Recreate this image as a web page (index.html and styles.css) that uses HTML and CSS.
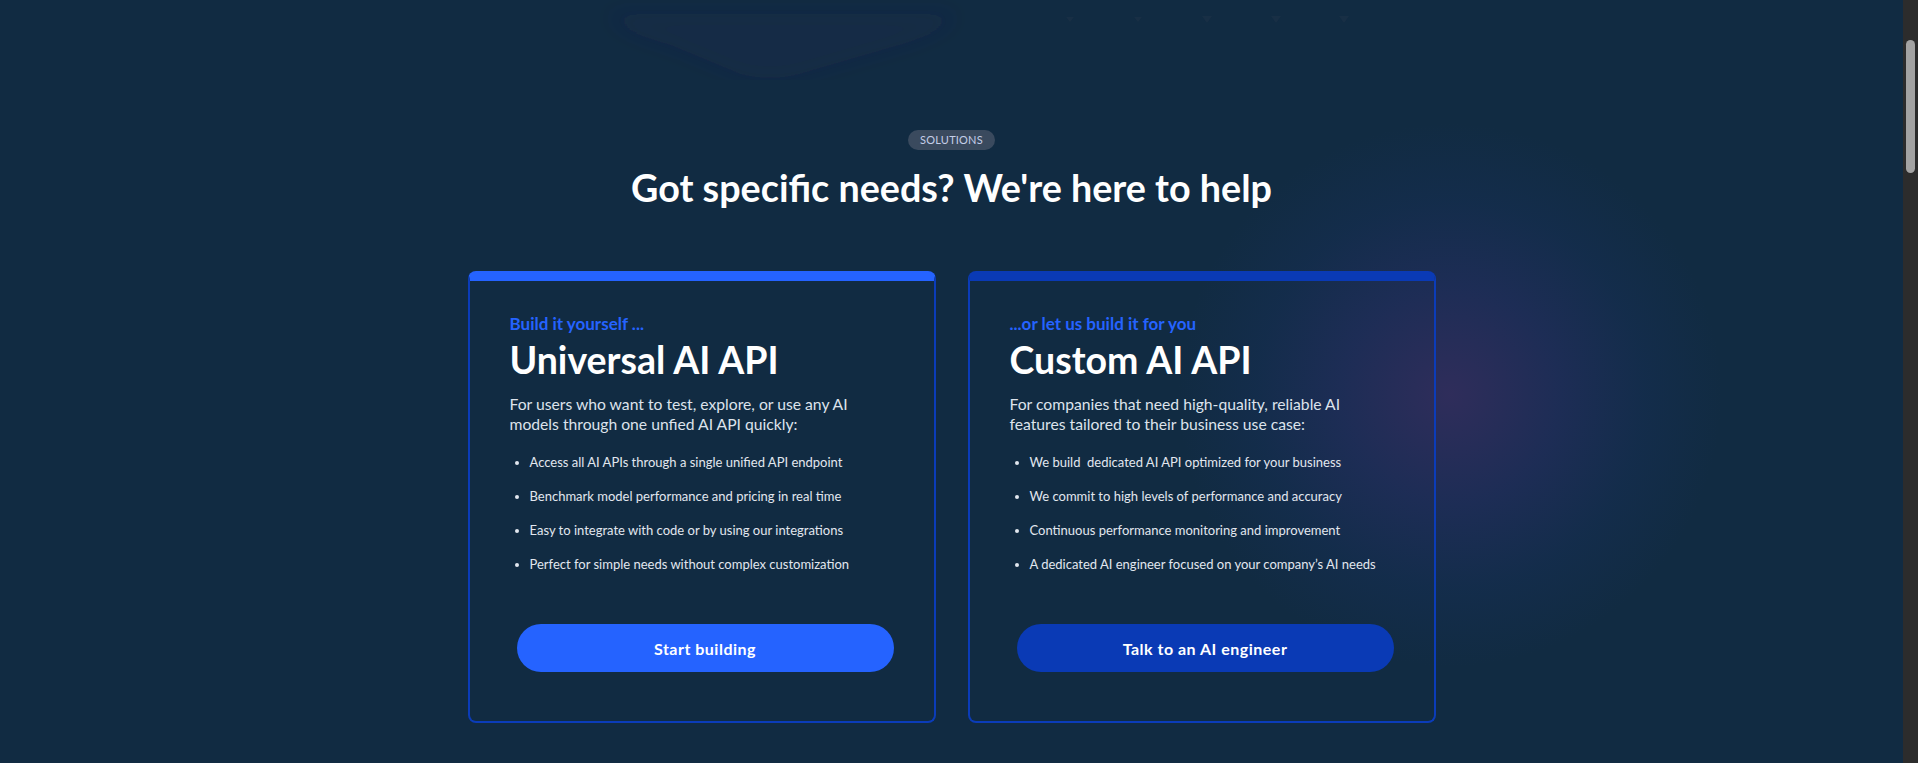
FILE: index.html
```html
<!DOCTYPE html>
<html lang="en">
<head>
<meta charset="utf-8">
<title>Solutions</title>
<link rel="stylesheet" href="styles.css">
</head>
<body>
<div class="page">
  <div class="prev">
    <svg class="prev-fade" width="1903" height="80" viewBox="0 0 1903 80" aria-hidden="true">
      <defs>
        <filter id="soft" x="-20%" y="-60%" width="140%" height="220%"><feGaussianBlur stdDeviation="10"/></filter>
      </defs>
      <path d="M610 14 H955 Q950 30 900 45 L800 74 Q770 82 740 74 L670 45 Q615 30 610 14 Z" fill="rgba(48,34,88,0.16)" filter="url(#soft)"/>
      <g fill="rgba(26,48,70,0.9)">
        <polygon points="1066,17 1074,17 1070,22"/>
        <polygon points="1134,17 1142,17 1138,22"/>
        <polygon points="1202,16 1212,16 1207,23"/>
        <polygon points="1271,16 1281,16 1276,23"/>
        <polygon points="1339,16 1349,16 1344,23"/>
      </g>
    </svg>
  </div>

  <section class="solutions">
    <div class="glow" aria-hidden="true"></div>
    <span class="pill">SOLUTIONS</span>
    <h2 class="heading">Got specific needs? We're here to help</h2>

    <div class="cards">
      <article class="card card-self">
        <div class="eyebrow">Build it yourself ...</div>
        <h3 class="card-title">Universal AI API</h3>
        <p class="card-desc">For users who want to test, explore, or use any AI models through one unfied AI API quickly:</p>
        <ul class="card-list">
          <li>Access all AI APIs through a single unified API endpoint</li>
          <li>Benchmark model performance and pricing in real time</li>
          <li>Easy to integrate with code or by using our integrations</li>
          <li>Perfect for simple needs without complex customization</li>
        </ul>
        <a class="btn btn-self" href="#">Start building</a>
      </article>

      <article class="card card-custom">
        <div class="eyebrow">...or let us build it for you</div>
        <h3 class="card-title">Custom AI API</h3>
        <p class="card-desc">For companies that need high-quality, reliable AI features tailored to their business use case:</p>
        <ul class="card-list">
          <li>We build&nbsp; dedicated AI API optimized for your business</li>
          <li>We commit to high levels of performance and accuracy</li>
          <li>Continuous performance monitoring and improvement</li>
          <li>A dedicated AI engineer focused on your company’s AI needs</li>
        </ul>
        <a class="btn btn-custom" href="#">Talk to an AI engineer</a>
      </article>
    </div>
  </section>
</div>

<div class="scrollbar" aria-hidden="true"><div class="scrollbar-thumb"></div></div>
</body>
</html>
```

FILE: styles.css
```css
html {
  background: #112b42;
}

body {
  margin: 0;
  height: 763px;
  overflow: hidden;
  background: #112b42;
  font-family: Lato, "Open Sans", "Liberation Sans", sans-serif;
  color: #ffffff;
}

.page {
  width: calc(100% - 15px);
  position: relative;
}

.prev {
  height: 80px;
}

.prev-fade {
  display: block;
}

.solutions {
  position: relative;
  display: flex;
  flex-direction: column;
  align-items: center;
  padding: 50px 0 40px;
}

.glow {
  position: absolute;
  left: 1175px;
  top: 40px;
  width: 550px;
  height: 550px;
  border-radius: 50%;
  background: radial-gradient(circle at 50% 50%,
    rgba(92, 48, 128, 0.40) 0%,
    rgba(62, 50, 138, 0.27) 28%,
    rgba(35, 55, 135, 0.13) 50%,
    rgba(17, 43, 66, 0) 70%);
  pointer-events: none;
  z-index: 0;
}

.pill {
  position: relative;
  z-index: 1;
  height: 20px;
  line-height: 20px;
  padding: 0 12px;
  border-radius: 10px;
  background: #3a4a5e;
  color: #c4cee8;
  font-size: 11px;
  letter-spacing: 0.2px;
}

.heading {
  position: relative;
  z-index: 1;
  margin: 16px 0 0;
  font-size: 37.7px;
  line-height: 44px;
  font-weight: 700;
  color: #ffffff;
}

.cards {
  position: relative;
  z-index: 1;
  margin-top: 61px;
  display: grid;
  grid-template-columns: 468px 468px;
  gap: 32px;
}

.card {
  box-sizing: border-box;
  height: 452px;
  border: 2px solid #0b3cb9;
  border-top: 10px solid #2563ff;
  border-radius: 8px;
  padding: 31px 40px 48px;
  display: flex;
  flex-direction: column;
  align-items: flex-start;
}

.card-custom {
  border-top-color: #0a3ab5;
}

.eyebrow {
  font-size: 17px;
  line-height: 24px;
  font-weight: 700;
  color: #2563ff;
}

.card-title {
  margin: 1.5px 0 0;
  font-size: 37.5px;
  line-height: 44px;
  font-weight: 700;
  color: #ffffff;
}

.card-desc {
  margin: 12px 0 0;
  max-width: 360px;
  font-size: 15.7px;
  line-height: 20px;
  color: #dde3ec;
}

.card-list {
  margin: 18px 0 0;
  padding-left: 20px;
  font-size: 13px;
  line-height: 20px;
  color: #e2e7ef;
}

.card-list li {
  margin-bottom: 14.33px;
}

.card-list li:last-child {
  margin-bottom: 0;
}

.btn {
  box-sizing: border-box;
  margin: 50px 0 0 7px;
  width: 377px;
  height: 48px;
  border-radius: 24px;
  display: flex;
  align-items: center;
  justify-content: center;
  font-size: 16px;
  font-weight: 700;
  letter-spacing: 0.5px;
  color: #ffffff;
  text-decoration: none;
}

.btn-self {
  background: #2563ff;
}

.btn-custom {
  background: #0a3ab5;
}

.scrollbar {
  position: fixed;
  top: 0;
  right: 0;
  width: 15px;
  height: 100%;
  background: #2c2c2c;
}

.scrollbar-thumb {
  margin: 40px 0 0 3px;
  width: 9px;
  height: 133px;
  border-radius: 5px;
  background: #a3a3a3;
}
```
